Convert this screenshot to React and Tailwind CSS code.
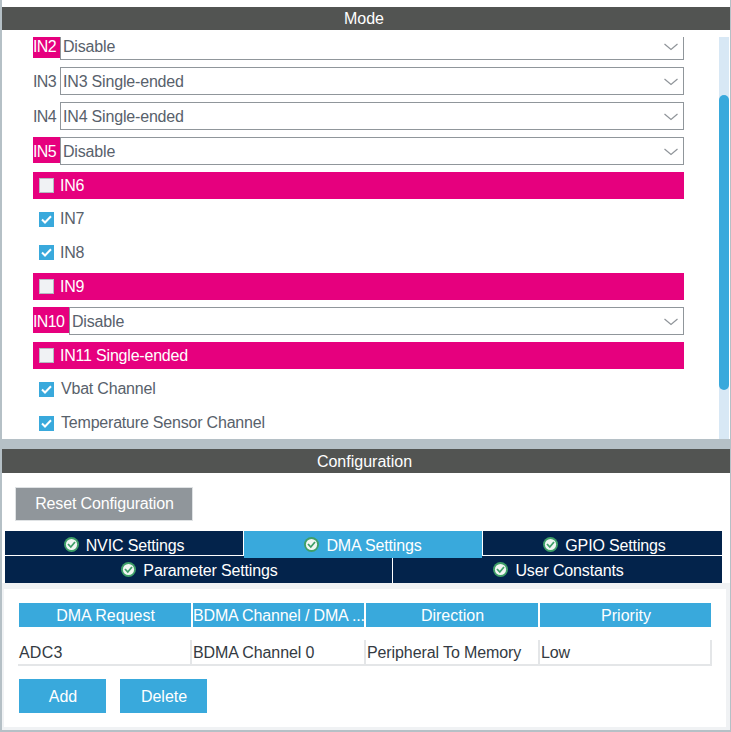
const font = { fontFamily: '"Liberation Sans", Arial, sans-serif' };

function Chevron() {
  return (
    <svg width="14" height="8" viewBox="0 0 14 8" className="shrink-0" fill="none">
      <path d="M0.5 1 L7 6.5 L13.5 1" stroke="#8f9499" strokeWidth="1.2" />
    </svg>
  );
}

function SelectRow({ label, value, pink, first, labelW = "w-[27px]" }) {
  return (
    <div className={`flex ${first ? "h-[23px]" : "h-[28px] mt-[7px]"}`}>
      <div className={`${labelW} shrink-0 tracking-[-0.6px] ${pink ? "bg-[#e6007e] text-white" : "text-[#58616b]"} ${first ? "h-[21px] leading-[19px]" : "h-[26px] leading-[29px]"}`}>
        {label}
      </div>
      <div className={`flex-1 flex items-center justify-between bg-white border-x border-b border-[#90969b] ${first ? "pb-[2px]" : "border-t pt-[1px]"} pl-[2px] pr-[5px] text-[#58616b] tracking-[-0.18px]`}>
        <span className={first ? "" : "mt-[1px]"}>{value}</span>
        <Chevron />
      </div>
    </div>
  );
}

function Check({ label, pink, mt = "mt-[7px]", textClass = "ml-[6px]" }) {
  return (
    <div className={`flex items-center h-[27px] ${mt} pl-[6px] ${pink ? "bg-[#e6007e] text-white" : "text-[#58616b]"}`}>
      {pink ? (
        <div className="w-[15px] h-[15px] bg-[#f0f2f4] border border-[#b5bcc2] shrink-0" />
      ) : (
        <div className="w-[15px] h-[15px] bg-[#39a9dc] shrink-0 flex items-center justify-center">
          <svg width="11" height="9" viewBox="0 0 11 9" fill="none">
            <path d="M1 4.5 L4 7.5 L10 1.2" stroke="white" strokeWidth="2" />
          </svg>
        </div>
      )}
      <span className={`${textClass} tracking-[-0.2px]`}>{label}</span>
    </div>
  );
}

function Ok() {
  return (
    <svg width="15" height="15" viewBox="0 0 15 15" className="shrink-0">
      <circle cx="7.5" cy="7.5" r="7.5" fill="#3f9f68" />
      <circle cx="7.5" cy="7.5" r="5.6" fill="#f2f6f3" />
      <path d="M4 7 L6.8 10 L11 5" stroke="#3f9f68" strokeWidth="1.8" fill="none" />
    </svg>
  );
}

function Tab({ label, active, w, shift = "" }) {
  return (
    <div className={`${w} h-[27px] relative flex items-center justify-center gap-[7px] text-white tracking-[-0.15px] ${shift} ${active ? "bg-[#39a9dc]" : "bg-[#03234b]"}`}>
      <div className="flex items-center -mt-[1px]"><Ok /></div>
      <span className="mt-[2px]">{label}</span>
      {!active && <div className="absolute left-0 right-0 top-[24px] h-[1px] bg-white" />}
    </div>
  );
}

function Head({ children, w, ml = "" }) {
  return (
    <div className={`${w} ${ml} bg-[#39a9dc] text-white text-center whitespace-nowrap overflow-hidden pl-[1px]`}>{children}</div>
  );
}

function Cell({ children, w }) {
  return (
    <div className={`${w} h-[24px] border-r-2 border-[#e4e6e8] pl-[1px] pr-[1px] whitespace-nowrap leading-[26px] text-[#333a42] tracking-[-0.1px]`}>{children}</div>
  );
}

export default function App() {
  return (
    <div style={font} className="w-[731px] h-[732px] bg-white text-[16px] border-l-2 border-r border-[#b5c0c6] flex flex-col overflow-hidden">
      <div className="h-[7px] shrink-0" />
      <div className="h-[23px] shrink-0 bg-[#525452] text-white text-center leading-[23px] pr-[4px]">Mode</div>

      <div className="h-[409px] shrink-0 flex">
        <div className="w-[717px] pt-[7px] pl-[31px] pr-[35px] overflow-hidden">
          <SelectRow first pink label="IN2" value="Disable" />
          <SelectRow label="IN3" value="IN3 Single-ended" />
          <SelectRow label="IN4" value="IN4 Single-ended" />
          <SelectRow pink label="IN5" value="Disable" />
          <Check pink label="IN6" />
          <Check label="IN7" textClass="ml-[6px] pb-[2px]" />
          <Check label="IN8" mt="mt-[6px]" />
          <Check pink label="IN9" />
          <SelectRow pink label="IN10" value="Disable" labelW="w-[36px]" />
          <Check pink label="IN11 Single-ended" />
          <Check label="Vbat Channel" textClass="ml-[7px] pb-[2px]" />
          <Check label="Temperature Sensor Channel" textClass="ml-[7px] pb-[2px]" />
        </div>
        <div className="w-[10px] mt-[7px] bg-[#d8e8f5] relative">
          <div className="absolute left-0 top-[58px] w-[10px] h-[295px] rounded-[5px] bg-[#39a9dc]" />
        </div>
      </div>

      <div className="h-[10px] shrink-0 bg-[#b5c0c6]" />
      <div className="h-[24px] shrink-0 bg-[#525452] text-white text-center leading-[25px] pr-[3px]">Configuration</div>

      <div className="px-[13px] pt-[14px] h-[58px] shrink-0">
        <div className="w-[178px] h-[34px] pl-[1px] bg-[#90969b] border border-[#dfe2e4] text-white flex items-center justify-center tracking-[-0.15px]">Reset Configuration</div>
      </div>

      <div className="pl-[3px] shrink-0 w-[720px]">
        <div className="flex">
          <Tab w="w-[238px] mr-[1px]" label="NVIC Settings" />
          <Tab w="w-[238px] mr-[1px]" label="DMA Settings" active />
          <Tab w="w-[239px]" label="GPIO Settings" shift="pl-[4px]" />
        </div>
        <div className="flex h-[27px] -mt-[2px] text-white tracking-[-0.15px]">
          <div className="w-[387px] pl-[2px] bg-[#03234b] flex items-center justify-center gap-[7px]"><div className="flex items-center -mt-[1px]"><Ok /></div><span className="mt-[2px]">Parameter Settings</span></div>
          <div className="w-[1px] bg-white" />
          <div className="w-[329px] pl-[2px] bg-[#03234b] flex items-center justify-center gap-[7px]"><div className="flex items-center -mt-[1px]"><Ok /></div><span className="mt-[2px]">User Constants</span></div>
        </div>
      </div>

      <div className="flex-1 bg-[#f0f2f4] pt-[6px] pl-[2px] pr-[4px] pb-[3px] flex">
        <div className="flex-1 bg-white pl-[15px] pt-[14px]">
          <div className="flex h-[24px] leading-[26px]">
            <Head w="w-[172px]">DMA Request</Head>
            <Head w="w-[171px]" ml="ml-[2px]"><span className="block text-left -ml-[1px] tracking-[-0.15px]">BDMA Channel / DMA ...</span></Head>
            <Head w="w-[172px]" ml="ml-[2px]">Direction</Head>
            <Head w="w-[171px]" ml="ml-[2px]">Priority</Head>
          </div>
          <div className="flex mt-[13px] w-[694px] -ml-[1px] border-b-2 border-[#e4e6e8]">
            <Cell w="w-[174px]"><span className="tracking-[0.2px]">ADC3</span></Cell>
            <Cell w="w-[174px]">BDMA Channel 0</Cell>
            <Cell w="w-[174px]">Peripheral To Memory</Cell>
            <Cell w="w-[172px]">Low</Cell>
          </div>
          <div className="flex gap-[14px] mt-[13px]">
            <div className="w-[87px] h-[34px] pt-[2px] pl-[1px] bg-[#39a9dc] text-white flex items-center justify-center">Add</div>
            <div className="w-[87px] h-[34px] pt-[2px] pl-[1px] bg-[#39a9dc] text-white flex items-center justify-center">Delete</div>
          </div>
        </div>
      </div>
      <div className="h-[2px] shrink-0 bg-[#b5c0c6]" />
    </div>
  );
}
